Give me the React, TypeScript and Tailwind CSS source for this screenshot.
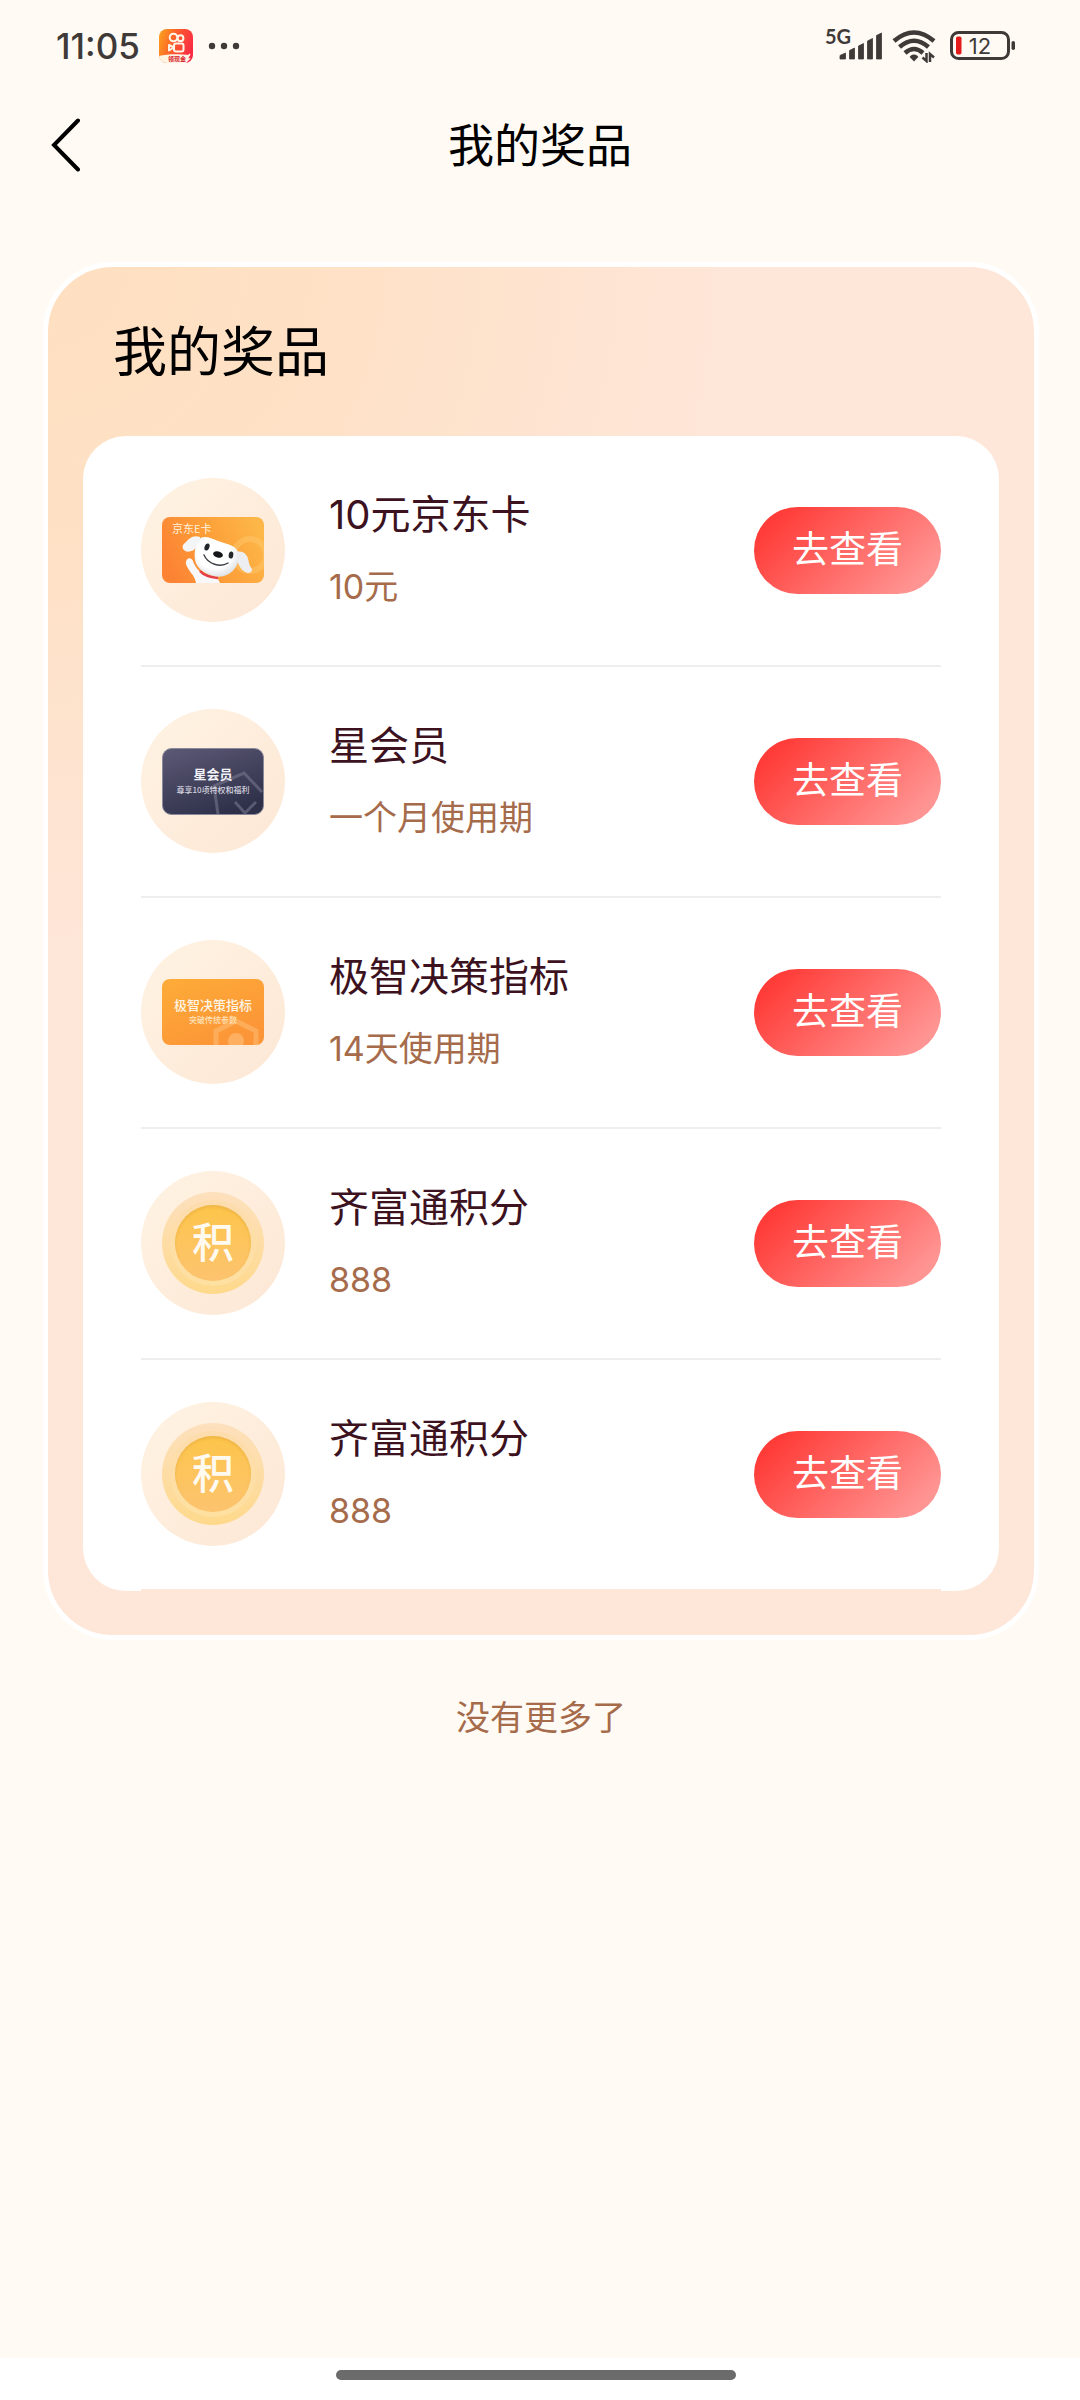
import React from "react";

const CJK = '"Noto Sans CJK SC", sans-serif';

function KuaishouIcon() {
  return (
    <svg viewBox="0 0 34 34" className="size-[34px]" role="img" aria-label="快手极速版">
      <defs>
        <linearGradient id="ks" x1="0" y1="0.3" x2="1" y2="0.6">
          <stop offset="0" stopColor="#fb9a1f" />
          <stop offset="0.45" stopColor="#fc5a2c" />
          <stop offset="1" stopColor="#fb2a45" />
        </linearGradient>
        <clipPath id="ksClip">
          <rect width="34" height="34" rx="8" />
        </clipPath>
      </defs>
      <g clipPath="url(#ksClip)">
        <rect width="34" height="34" fill="url(#ks)" />
        <path d="M0 27 C8 25 18 25 31 26 L27 34 H0 Z" fill="#fff3e2" />
        <path d="M31 25 L27 30 H30 L26 34" stroke="#fff3e2" strokeWidth="1.5" fill="none" />
      </g>
      <g fill="none" stroke="#fff6e8" strokeWidth="2">
        <circle cx="14.500" cy="8.500" r="3.800" />
        <circle cx="21.500" cy="9.200" r="2.900" />
        <rect x="15" y="14.500" width="9.500" height="8" rx="2" />
        <path d="M15 18.500 L10 16 V21.500 Z" strokeLinejoin="round" />
      </g>
      <text x="9" y="32" fontSize="6" fontWeight="700" fill="#d8242c" fontFamily={CJK}>
        领现金
      </text>
    </svg>
  );
}

function StatusBar() {
  return (
    <div className="flex h-[92px] items-center justify-between pr-16 pl-14 text-[#3f3a38]">
      <div className="flex items-center">
        <span className="w-[103px] text-[35px] leading-[40px] font-medium">11:05</span>
        <KuaishouIcon />
        <svg viewBox="0 0 32 8" className="ml-[15px] h-2 w-8" fill="currentColor" aria-hidden="true">
          <circle cx="4" cy="4" r="3.200" />
          <circle cx="16" cy="4" r="3.200" />
          <circle cx="28" cy="4" r="3.200" />
        </svg>
      </div>
      <div className="flex items-center">
        <svg viewBox="-1 -6 60 46" className="mr-2 h-[46px] w-[60px]" fill="currentColor" role="img" aria-label="5G">
          <text x="0" y="15" fontSize="20" fontWeight="700" fontFamily="Lato, sans-serif">
            5G
          </text>
          <path
            d="M15 26.500 L20.500 24 V30 H15 Z M24.500 21.500 L29.500 19 V30 H24.500 Z M33.500 17 L38.500 14.500 V30 H33.500 Z M42.500 12 L47.500 9.500 V30 H42.500 Z M51.500 6.500 L56.500 4 V30 H51.500 Z"
            stroke="currentColor"
            strokeWidth="0.8"
            strokeLinejoin="round"
          />
        </svg>
        <svg viewBox="0 0 44 34" className="mr-3.5 h-[34px] w-[44px]" fill="none" stroke="currentColor" strokeWidth="4.500" role="img" aria-label="Wi-Fi">
          <path d="M2 12 Q22 -5 42 12" />
          <path d="M7.500 18 Q22 5.500 36.500 18" />
          <path d="M13 24 Q22 16 31 24" />
          <path d="M22 25.500 C24.500 25.500 26 27 26.300 28 L22 32.500 L17.700 28 C18 27 19.500 25.500 22 25.500 Z" fill="currentColor" stroke="none" />
          <path d="M34.500 24 V32 L30.500 28.500 M38 33 V25 L42 28.500" strokeWidth="2.500" />
        </svg>
        <svg viewBox="0 0 66 30" className="h-[30px] w-[66px]" role="img" aria-label="12%">
          <rect x="1.500" y="1.500" width="57" height="26" rx="7" fill="none" stroke="currentColor" strokeWidth="3" />
          <rect x="61.500" y="10" width="3.500" height="9" rx="1.700" fill="currentColor" />
          <rect x="6" y="5.500" width="5.500" height="18" rx="1.700" fill="#e31b1b" />
          <text x="30" y="22.500" textAnchor="middle" fontSize="22" fill="currentColor" fontFamily="Inter, sans-serif">
            12
          </text>
        </svg>
      </div>
    </div>
  );
}

function JoyCard() {
  return (
    <svg viewBox="0 0 102 66" className="h-[66px] w-[102px]" aria-hidden="true">
      <defs>
        <linearGradient id="jd" x1="0" y1="0.6" x2="1" y2="0.3">
          <stop offset="0" stopColor="#fc8234" />
          <stop offset="0.5" stopColor="#fd9f38" />
          <stop offset="1" stopColor="#fdb749" />
        </linearGradient>
        <radialGradient id="face" cx="0.45" cy="0.4" r="0.65">
          <stop offset="0.6" stopColor="#ffffff" />
          <stop offset="1" stopColor="#d9dde2" />
        </radialGradient>
        <clipPath id="jdClip">
          <rect width="102" height="66" rx="8" />
        </clipPath>
      </defs>
      <g clipPath="url(#jdClip)">
        <rect width="102" height="66" fill="url(#jd)" />
        <circle cx="88" cy="38" r="16" fill="none" stroke="#ffd07a" strokeOpacity="0.35" strokeWidth="6" />
        <path d="M24 47 C23 41 29 39 31 44 C33 50 37 55 42 57 L56 62 L58 66 H34 C33 58 26 54 24 47 Z" fill="#f8f8fa" />
        <path d="M38 54 C42 59 49 60 56 61" stroke="#e3404c" strokeWidth="2.500" fill="none" />
        <path d="M38 20 C30 17 26 23 21 28 C19 33 25 36 29 34 C33 34 35 28 38 24 Z" fill="#f4f5f7" />
        <path d="M74 35 C83 33 86 39 87 46 C88 51 92 52 89 55 C85 58 80 53 78 50 C76 46 74 42 74 35 Z" fill="#eceef1" />
        <path d="M36 24 C40 17 48 21 56 24 C64 27 74 28 76 35 C79 44 73 56 62 59 C50 62 35 54 33 43 C32 36 33 29 36 24 Z" fill="url(#face)" />
        <ellipse cx="45" cy="30" rx="2.400" ry="3.600" fill="#23262b" transform="rotate(20 45 30)" />
        <ellipse cx="69" cy="38" rx="2.300" ry="3.600" fill="#23262b" transform="rotate(10 69 38)" />
        <ellipse cx="56" cy="37.500" rx="5" ry="3" fill="#15171b" transform="rotate(14 56 37.500)" />
        <path d="M42 38 C46 47 58 51 66 46" stroke="#3b3f45" strokeWidth="1.400" fill="none" strokeLinecap="round" />
      </g>
      <text x="10" y="16" fontSize="11" fill="#fff1dc" fontFamily={CJK}>
        京东E卡
      </text>
    </svg>
  );
}

function StarCard() {
  return (
    <svg viewBox="0 0 102 67" className="h-[67px] w-[102px]" aria-hidden="true">
      <defs>
        <linearGradient id="star" x1="0.1" y1="0" x2="0.6" y2="1">
          <stop offset="0" stopColor="#5b5874" />
          <stop offset="1" stopColor="#2e3049" />
        </linearGradient>
      </defs>
      <rect x="0.500" y="0.500" width="101" height="66" rx="9" fill="url(#star)" stroke="#8a889b" />
      <path d="M56 66 L52 38 L82 25 L100 44 M73 54 L83 65 L94 54" fill="none" stroke="#77778c" strokeOpacity="0.6" strokeWidth="3" />
      <text x="51" y="31" textAnchor="middle" fontSize="13" fontWeight="700" fill="#f3f2f8" fontFamily={CJK}>
        星会员
      </text>
      <text x="51" y="45" textAnchor="middle" fontSize="8" fontWeight="500" fill="#d3d2de" fontFamily={CJK}>
        尊享10项特权和福利
      </text>
    </svg>
  );
}

function IndicatorCard() {
  return (
    <svg viewBox="0 0 102 66" className="h-[66px] w-[102px]" aria-hidden="true">
      <defs>
        <linearGradient id="ind" x1="0" y1="0" x2="0.6" y2="1">
          <stop offset="0" stopColor="#fdac38" />
          <stop offset="1" stopColor="#fc9537" />
        </linearGradient>
        <clipPath id="indClip">
          <rect width="102" height="66" rx="8" />
        </clipPath>
      </defs>
      <g clipPath="url(#indClip)">
        <rect width="102" height="66" fill="url(#ind)" />
        <path d="M54 72 V52 L74 42 L94 52 V72" fill="none" stroke="#ffc583" strokeOpacity="0.45" strokeWidth="5" />
        <circle cx="74" cy="62" r="8" fill="#ffc583" fillOpacity="0.55" />
      </g>
      <text x="51" y="31" textAnchor="middle" fontSize="13" fontWeight="500" fill="#fff5e4" fontFamily={CJK}>
        极智决策指标
      </text>
      <text x="51" y="44" textAnchor="middle" fontSize="8" fontWeight="500" fill="#ffe2bb" fontFamily={CJK}>
        突破传统参数
      </text>
    </svg>
  );
}

function PointsCoin() {
  return (
    <div className="flex size-[102px] items-center justify-center rounded-full bg-linear-to-b from-[#fde0bd] to-[#fed98b]">
      <div className="flex size-[86px] items-center justify-center rounded-full bg-linear-to-b from-[#fddcae] to-[#fee0a0]">
        <div className="flex size-[76px] items-center justify-center rounded-full bg-linear-to-b from-[#fcc548] to-[#fdc36f] text-[42px] leading-none font-medium text-[#fffaf0] shadow-[inset_0_2px_3px_#efb548]">
          积
        </div>
      </div>
    </div>
  );
}

const prizes = [
  { title: "10元京东卡", detail: "10元", Art: JoyCard },
  { title: "星会员", detail: "一个月使用期", Art: StarCard },
  { title: "极智决策指标", detail: "14天使用期", Art: IndicatorCard },
  { title: "齐富通积分", detail: "888", Art: PointsCoin },
  { title: "齐富通积分", detail: "888", Art: PointsCoin },
];

export default function App() {
  return (
    <div className="flex min-h-screen flex-col bg-[#fffaf3] font-[Inter,'Noto_Sans_CJK_SC',sans-serif]">
      <StatusBar />
      <header className="grid h-[106px] grid-cols-[1fr_auto_1fr] items-center px-11">
        <button type="button" aria-label="返回" className="flex size-11 items-center justify-center text-black">
          <svg viewBox="0 0 30 54" className="h-[54px] w-[30px]" fill="none" stroke="currentColor" strokeWidth="4" strokeLinecap="round" aria-hidden="true">
            <path d="M27 2.500 L3 27 L27 51.500" />
          </svg>
        </button>
        <h1 className="text-[46px] leading-[64px] text-black">我的奖品</h1>
      </header>
      <main className="flex-1 pt-16 pr-[41px] pl-[43px]">
        <section className="rounded-[70px] border-5 border-white bg-[radial-gradient(circle_at_0_0,#ffdfc0_0px,#fee1c6_300px,#fee6d8_680px)] bg-origin-border px-[35px] pb-11">
          <h2 className="px-[30px] pt-[46px] pb-[43px] text-[54px] leading-[80px] text-black">我的奖品</h2>
          <ul className="rounded-[43px] bg-white px-[58px]">
            {prizes.map(({ title, detail, Art }, i) => (
              <li key={i} className="flex items-center border-b-2 border-[#eeeeee] pt-[42px] pb-[43px] last:border-[#fee6d8]">
                <div className="flex size-36 shrink-0 items-center justify-center rounded-full bg-linear-to-br from-[#fff3e3] to-[#fde7d5]">
                  <Art />
                </div>
                <div className="min-w-0 flex-1 pl-11">
                  <h3 className="text-[40px] leading-[56px] text-[#3d121f]">{title}</h3>
                  <p className="mt-[18px] text-[34px] leading-[52px] text-[#a56b4b]">{detail}</p>
                </div>
                <button
                  type="button"
                  className="h-[87px] w-[187px] shrink-0 rounded-full bg-[linear-gradient(135deg,#ff3c38_12%,#ff9593_88%)] text-[37px] leading-[52px] text-white"
                >
                  去查看
                </button>
              </li>
            ))}
          </ul>
        </section>
        <p className="pt-[52px] text-center text-[34px] leading-[52px] text-[#a56b4b]">没有更多了</p>
      </main>
      <footer className="flex h-[42px] justify-center bg-white pt-3 pr-2">
        <div className="h-2.5 w-[400px] rounded-full bg-[#6b6b6b]" />
      </footer>
    </div>
  );
}
